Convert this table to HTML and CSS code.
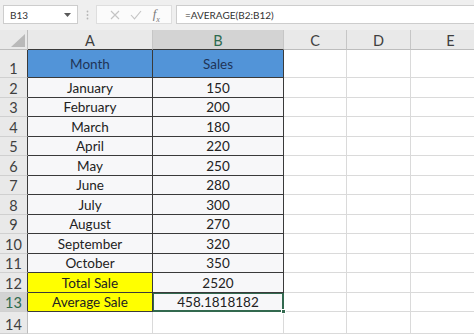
FILE: index.html
```html
<!DOCTYPE html>
<html lang="en">
<head>
    <meta charset="UTF-8">
    <title>Sales - Average</title>
    <link rel="stylesheet" href="styles.css">
</head>
<body>
    <!-- Formula bar -->
    <div class="bar">
        <div class="namebox">
            <span>B13</span>
            <svg class="caret" width="7" height="4" viewBox="0 0 7 4"><path d="M0 0h7L3.5 4z" fill="#5a5a5a"/></svg>
        </div>
        <div class="grip">
            <svg width="3" height="10" viewBox="0 0 3 10"><circle cx="1.5" cy="1.5" r="0.9" fill="#b5b5b5"/><circle cx="1.5" cy="5" r="0.9" fill="#b5b5b5"/><circle cx="1.5" cy="8.5" r="0.9" fill="#b5b5b5"/></svg>
        </div>
        <div class="fbtns">
            <svg width="10" height="10" viewBox="0 0 10 10"><path d="M1 1l8 8M9 1L1 9" stroke="#c4c4c4" stroke-width="1.1"/></svg>
            <svg width="12" height="10" viewBox="0 0 12 10"><path d="M1 5l3.5 3.8L11 1" stroke="#c4c4c4" stroke-width="1.1" fill="none"/></svg>
            <span class="fx">f<sub>x</sub></span>
        </div>
        <div class="formula">=AVERAGE(B2:B12)</div>
    </div>

    <!-- Sheet grid -->
    <div class="sheet">
        <div class="corner"><svg width="14" height="13" viewBox="0 0 14 13"><path d="M14 0v13H0z" fill="#b9b9b9"/></svg></div>
        <div class="col">A</div>
        <div class="col sel">B</div>
        <div class="col">C</div>
        <div class="col">D</div>
        <div class="col">E</div>

        <div class="row in">1</div>
        <div class="cell t head">Month</div>
        <div class="cell t head">Sales</div>
        <div class="cell"></div><div class="cell"></div><div class="cell"></div>

        <div class="row in">2</div>
        <div class="cell t">January</div><div class="cell t">150</div>
        <div class="cell"></div><div class="cell"></div><div class="cell"></div>

        <div class="row in">3</div>
        <div class="cell t">February</div><div class="cell t">200</div>
        <div class="cell"></div><div class="cell"></div><div class="cell"></div>

        <div class="row in">4</div>
        <div class="cell t">March</div><div class="cell t">180</div>
        <div class="cell"></div><div class="cell"></div><div class="cell"></div>

        <div class="row in">5</div>
        <div class="cell t">April</div><div class="cell t">220</div>
        <div class="cell"></div><div class="cell"></div><div class="cell"></div>

        <div class="row in">6</div>
        <div class="cell t">May</div><div class="cell t">250</div>
        <div class="cell"></div><div class="cell"></div><div class="cell"></div>

        <div class="row in">7</div>
        <div class="cell t">June</div><div class="cell t">280</div>
        <div class="cell"></div><div class="cell"></div><div class="cell"></div>

        <div class="row in">8</div>
        <div class="cell t">July</div><div class="cell t">300</div>
        <div class="cell"></div><div class="cell"></div><div class="cell"></div>

        <div class="row in">9</div>
        <div class="cell t">August</div><div class="cell t">270</div>
        <div class="cell"></div><div class="cell"></div><div class="cell"></div>

        <div class="row in">10</div>
        <div class="cell t">September</div><div class="cell t">320</div>
        <div class="cell"></div><div class="cell"></div><div class="cell"></div>

        <div class="row in">11</div>
        <div class="cell t">October</div><div class="cell t">350</div>
        <div class="cell"></div><div class="cell"></div><div class="cell"></div>

        <div class="row in">12</div>
        <div class="cell t yellow">Total Sale</div><div class="cell t">2520</div>
        <div class="cell"></div><div class="cell"></div><div class="cell"></div>

        <div class="row in sel">13</div>
        <div class="cell t yellow">Average Sale</div>
        <div class="cell t active">458.1818182<span class="handle"></span></div>
        <div class="cell"></div><div class="cell"></div><div class="cell"></div>

        <div class="row">14</div>
        <div class="cell"></div><div class="cell"></div>
        <div class="cell"></div><div class="cell"></div><div class="cell"></div>
    </div>
</body>
</html>
```

FILE: styles.css
```css
/* Base */
body {
    margin: 0;
    width: 474px;
    height: 334px;
    overflow: hidden;
    background: #ffffff;
    font-family: Lato, "Liberation Sans", sans-serif;
    color: #222222;
}

/* Formula bar */
.bar {
    height: 30px;
    box-sizing: border-box;
    padding: 5px 0 6px 3px;
    background: #efefef;
    display: flex;
    align-items: stretch;
}

.namebox {
    width: 75px;
    box-sizing: border-box;
    border: 1px solid #cdcdcd;
    background: #ffffff;
    display: flex;
    align-items: center;
    justify-content: space-between;
    padding: 0 6px 0 6px;
    font-size: 10px;
    color: #333333;
}

.grip {
    width: 18px;
    display: flex;
    align-items: center;
    justify-content: center;
}

.fbtns {
    width: 76px;
    box-sizing: border-box;
    background: #fbfbfb;
    border: 1px solid #dedede;
    display: flex;
    align-items: center;
    justify-content: space-around;
    padding: 0 6px 0 8px;
    margin-right: 4px;
}

.fx {
    font-family: "Liberation Serif", serif;
    font-style: italic;
    font-size: 13px;
    color: #7a7a7a;
}

.fx sub {
    font-size: 8px;
}

.formula {
    flex: 1;
    border: 1px solid #cdcdcd;
    border-right: none;
    background: #ffffff;
    display: flex;
    align-items: center;
    padding-left: 8px;
    font-size: 10px;
    color: #333333;
}

/* Sheet */
.sheet {
    display: grid;
    grid-template-columns: 28px 125px 131px 63px 64px 80px;
    grid-template-rows: 20px 28px repeat(6, 20px 19px) 22px;
}

.sheet > div {
    box-sizing: border-box;
    border-right: 1px solid #dadada;
    border-bottom: 1px solid #dadada;
    display: flex;
    align-items: center;
    justify-content: center;
    font-size: 13.5px;
}

.corner {
    background: #e9e9e9;
    align-items: flex-end !important;
    justify-content: flex-end !important;
    padding: 0 2px 2px 0;
    border-color: #bdbdbd !important;
}

.sheet > .col {
    background: #e9e9e9;
    color: #3f3f3f;
    border-right-color: #c6c6c6;
    border-bottom-color: #bdbdbd;
    padding-top: 1px;
    font-size: 14.5px;
}

.sheet > .row {
    background: #e9e9e9;
    color: #3f3f3f;
    border-right-color: #bdbdbd;
    border-bottom-color: #d0d0d0;
    align-items: flex-end;
    font-size: 14.5px;
}

/* Left edge of the table sits on the row headers */
.sheet > .row.in {
    border-right-color: #3a3a3a;
}

.sheet > .sel {
    background: #d3d3d3;
    color: #2e6a4e;
}

/* Top edge of the table sits on the A and B headers */
.sheet > .col:nth-child(2),
.sheet > .col:nth-child(3) {
    border-bottom-color: #3a3a3a;
}

/* Bordered table A1:B13 */
.sheet > .t {
    background: #f7f7f9;
    border-right-color: #3a3a3a;
    border-bottom-color: #3a3a3a;
}

.sheet > .head {
    background: #5294d8;
    color: #1f3557;
}

.sheet > .yellow {
    background: #ffff00;
}

.sheet > .active {
    position: relative;
    border: 2px solid #32694f;
    border-top-width: 1px;
    border-left-width: 1px;
}

.handle {
    position: absolute;
    right: -4px;
    bottom: -4px;
    width: 5px;
    height: 5px;
    background: #32694f;
    border: 1px solid #ffffff;
    box-sizing: border-box;
}
```
